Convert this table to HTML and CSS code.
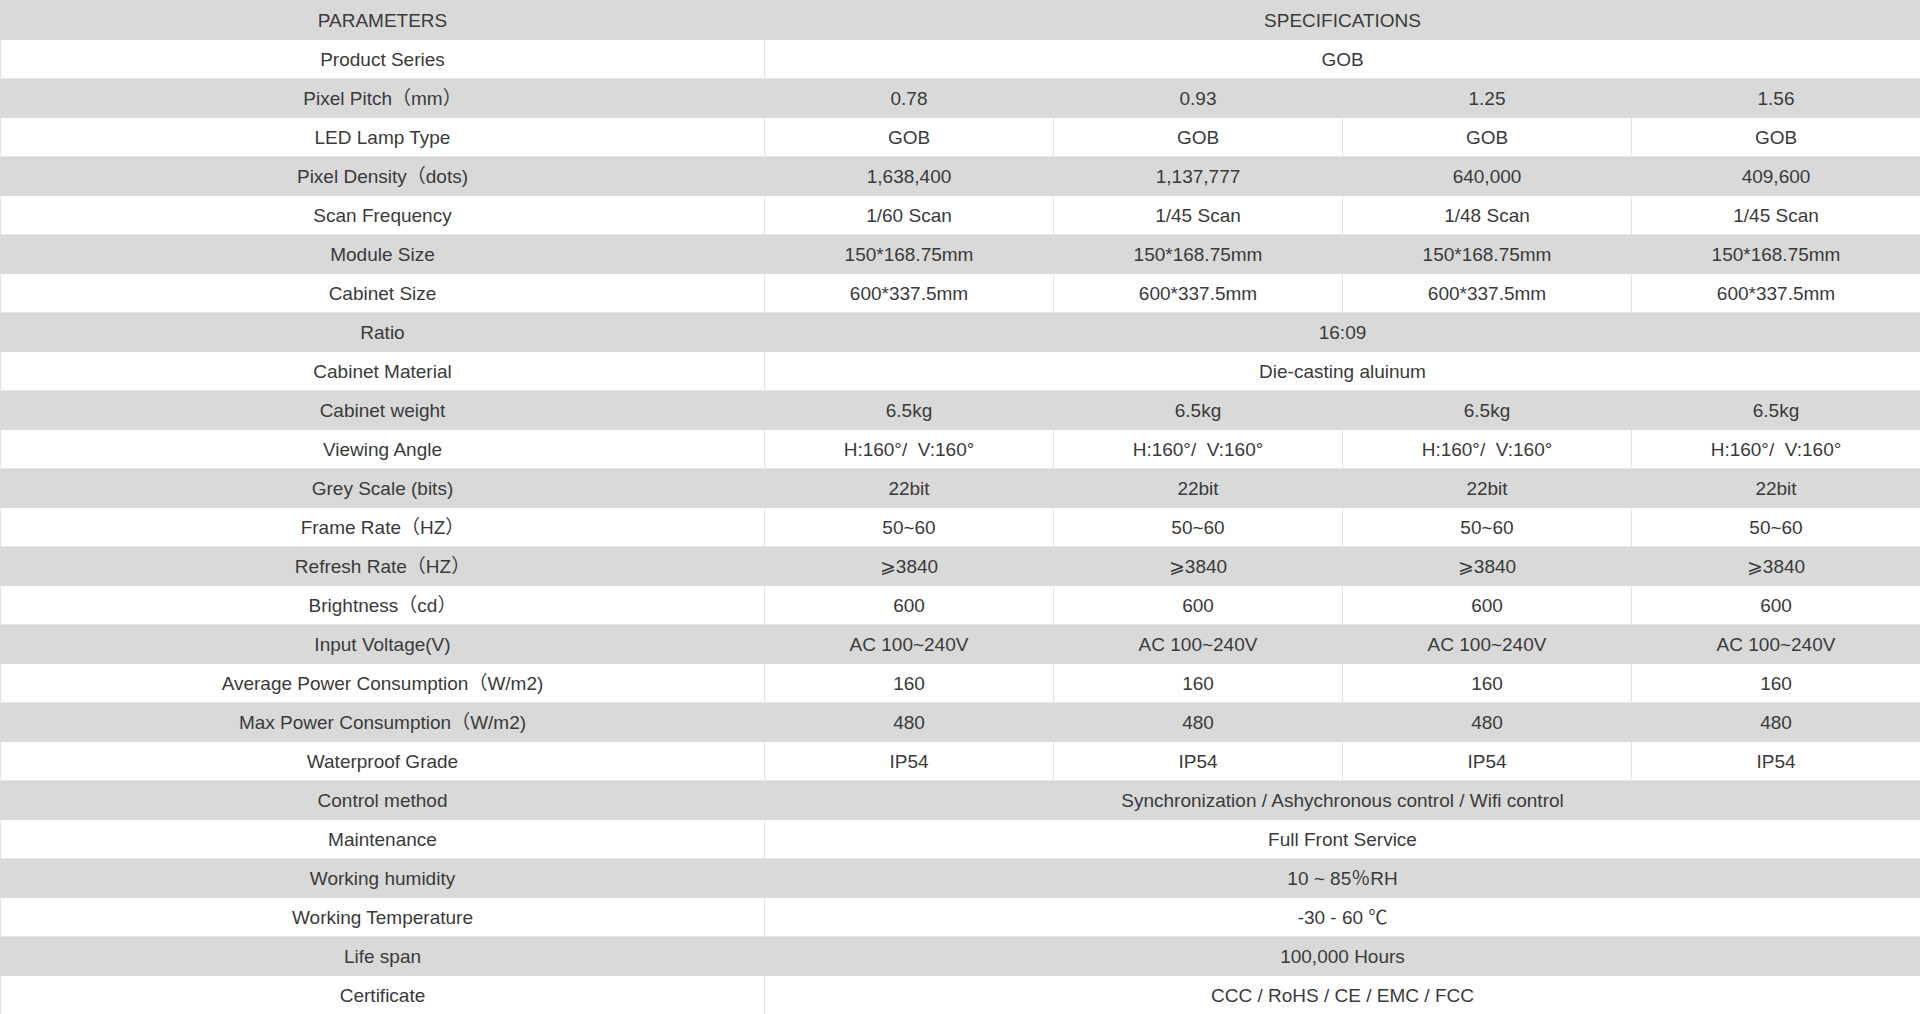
FILE: index.html
```html
<!DOCTYPE html>
<html>
<head>
<meta charset="utf-8">
<link rel="stylesheet" href="styles.css">
</head>
<body>
<table class="spec">
<colgroup><col class="c-param"><col class="c-val"><col class="c-val"><col class="c-val"><col class="c-val"></colgroup>
<tbody>
<tr><td>PARAMETERS</td><td colspan="4">SPECIFICATIONS</td></tr>
<tr><td>Product Series</td><td colspan="4">GOB</td></tr>
<tr><td>Pixel Pitch（mm）</td><td>0.78</td><td>0.93</td><td>1.25</td><td>1.56</td></tr>
<tr><td>LED Lamp Type</td><td>GOB</td><td>GOB</td><td>GOB</td><td>GOB</td></tr>
<tr><td>Pixel Density（dots)</td><td>1,638,400</td><td>1,137,777</td><td>640,000</td><td>409,600</td></tr>
<tr><td>Scan Frequency</td><td>1/60 Scan</td><td>1/45 Scan</td><td>1/48 Scan</td><td>1/45 Scan</td></tr>
<tr><td>Module Size</td><td>150*168.75mm</td><td>150*168.75mm</td><td>150*168.75mm</td><td>150*168.75mm</td></tr>
<tr><td>Cabinet Size</td><td>600*337.5mm</td><td>600*337.5mm</td><td>600*337.5mm</td><td>600*337.5mm</td></tr>
<tr><td>Ratio</td><td colspan="4">16:09</td></tr>
<tr><td>Cabinet Material</td><td colspan="4">Die-casting aluinum</td></tr>
<tr><td>Cabinet weight</td><td>6.5kg</td><td>6.5kg</td><td>6.5kg</td><td>6.5kg</td></tr>
<tr><td>Viewing Angle</td><td>H:160°/&nbsp; V:160°</td><td>H:160°/&nbsp; V:160°</td><td>H:160°/&nbsp; V:160°</td><td>H:160°/&nbsp; V:160°</td></tr>
<tr><td>Grey Scale (bits)</td><td>22bit</td><td>22bit</td><td>22bit</td><td>22bit</td></tr>
<tr><td>Frame Rate（HZ）</td><td>50~60</td><td>50~60</td><td>50~60</td><td>50~60</td></tr>
<tr><td>Refresh Rate（HZ）</td><td>⩾3840</td><td>⩾3840</td><td>⩾3840</td><td>⩾3840</td></tr>
<tr><td>Brightness（cd）</td><td>600</td><td>600</td><td>600</td><td>600</td></tr>
<tr><td>Input Voltage(V)</td><td>AC 100~240V</td><td>AC 100~240V</td><td>AC 100~240V</td><td>AC 100~240V</td></tr>
<tr><td>Average Power Consumption（W/m2)</td><td>160</td><td>160</td><td>160</td><td>160</td></tr>
<tr><td>Max Power Consumption（W/m2)</td><td>480</td><td>480</td><td>480</td><td>480</td></tr>
<tr><td>Waterproof Grade</td><td>IP54</td><td>IP54</td><td>IP54</td><td>IP54</td></tr>
<tr><td>Control method</td><td colspan="4">Synchronization / Ashychronous control / Wifi control</td></tr>
<tr><td>Maintenance</td><td colspan="4">Full Front Service</td></tr>
<tr><td>Working humidity</td><td colspan="4">10 ~ 85％RH</td></tr>
<tr><td>Working Temperature</td><td colspan="4">-30 - 60 ℃</td></tr>
<tr><td>Life span</td><td colspan="4">100,000 Hours</td></tr>
<tr><td>Certificate</td><td colspan="4">CCC / RoHS / CE / EMC / FCC</td></tr>
</tbody>
</table>
</body>
</html>
```
FILE: styles.css
```css
html, body {
  margin: 0;
  padding: 0;
  background: #ffffff;
}
.spec {
  width: 1920px;
  border-collapse: collapse;
  table-layout: fixed;
  font-family: "Liberation Sans", "Noto Sans CJK SC", sans-serif;
  font-size: 19px;
  color: #3a3a3a;
}
.c-param { width: 764px; }
.c-val { width: 289px; }
.spec td {
  box-sizing: border-box;
  height: 39px;
  padding: 2px 0 0 0;
  line-height: 20px;
  text-align: center;
  vertical-align: middle;
  border: 1px solid #e3e3e3;
  white-space: nowrap;
  overflow: hidden;
}
.spec tr:nth-child(odd) td {
  background: #d9d9d9;
  border-color: #dcdcdc;
}
.spec tr:nth-child(even) td {
  border-top-color: #e6e6e6;
  border-bottom-color: #e6e6e6;
}
```
